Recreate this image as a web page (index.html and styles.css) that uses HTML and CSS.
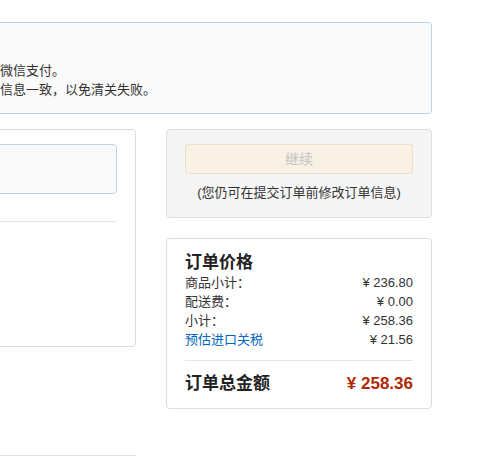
FILE: index.html
```html
<!DOCTYPE html>
<html lang="zh-CN">
<head>
<meta charset="utf-8">
<title>订单</title>
<link rel="stylesheet" href="styles.css">
</head>
<body>
<div class="page">
  <div class="notice">
    <div class="notice-line">海外购商品仅支持支付宝和微信支付。</div>
    <div class="notice-line">请确保收件人与支付人身份信息一致，以免清关失败。</div>
  </div>
  <div class="columns">
    <div class="left-col">
      <div class="card">
        <div class="field-box"></div>
        <div class="divider"></div>
        <div class="card-body"></div>
      </div>
      <div class="next-section"></div>
    </div>
    <div class="right-col">
      <div class="action-box">
        <div class="btn-continue">继续</div>
        <div class="action-note">(您仍可在提交订单前修改订单信息)</div>
      </div>
      <div class="price-box">
        <div class="price-title">订单价格</div>
        <div class="price-row"><span>商品小计：</span><span>¥ 236.80</span></div>
        <div class="price-row"><span>配送费：</span><span>¥ 0.00</span></div>
        <div class="price-row"><span>小计：</span><span>¥ 258.36</span></div>
        <div class="price-row"><span class="link">预估进口关税</span><span>¥ 21.56</span></div>
        <div class="price-divider"></div>
        <div class="total-row"><span>订单总金额</span><span class="total-amount">¥ 258.36</span></div>
      </div>
    </div>
  </div>
</div>
</body>
</html>
```

FILE: styles.css
```css
html, body {
  margin: 0;
  padding: 0;
  background: #fff;
}
body {
  font-family: "Liberation Sans", Arial, "Noto Sans CJK SC", sans-serif;
  font-size: 13px;
  color: #333;
  overflow: hidden;
}
.page {
  margin-left: -175px;
  width: 607px;
  padding-top: 22px;
}
.notice {
  border: 1px solid #b9d6df;
  border-radius: 4px;
  background: #fafafa;
  padding: 38px 18px 14px 18px;
  white-space: nowrap;
}
.notice-line {
  line-height: 19px;
  color: #333;
}
.columns {
  display: grid;
  grid-template-columns: 311px 266px;
  column-gap: 30px;
  margin-top: 15px;
  align-items: start;
}
.card {
  border: 1px solid #ddd;
  border-radius: 4px;
  padding: 14px 18px 14px 18px;
}
.field-box {
  height: 48px;
  border: 1px solid #b9d6df;
  border-radius: 4px;
  background: #f9f9f9;
}
.divider {
  margin-top: 27px;
  border-top: 1px solid #e5e5e5;
}
.card-body {
  height: 110px;
}
.next-section {
  margin-top: 108px;
  border-top: 1px solid #e0e0e0;
}
.action-box {
  border: 1px solid #ddd;
  border-radius: 4px;
  background: #f5f5f5;
  padding: 14px 18px 15px 18px;
}
.btn-continue {
  height: 28px;
  line-height: 28px;
  border: 1px solid #ebdfc5;
  border-radius: 3px;
  background: #f8f1e4;
  color: #c4c4c4;
  text-align: center;
  font-size: 14px;
}
.action-note {
  margin-top: 9px;
  line-height: 19px;
  text-align: center;
  white-space: nowrap;
}
.price-box {
  margin-top: 20px;
  border: 1px solid #ddd;
  border-radius: 4px;
  background: #fff;
  padding: 14px 18px 13px 18px;
}
.price-title {
  font-size: 17px;
  font-weight: bold;
  line-height: 20px;
  color: #222;
}
.price-row {
  display: flex;
  justify-content: space-between;
  line-height: 19px;
}
.link {
  color: #0066c0;
}
.price-divider {
  margin-top: 11px;
  border-top: 1px solid #e5e5e5;
}
.total-row {
  display: flex;
  justify-content: space-between;
  align-items: center;
  margin-top: 12px;
  line-height: 22px;
  font-size: 17px;
  font-weight: bold;
  color: #222;
}
.total-amount {
  color: #b12704;
}
```
